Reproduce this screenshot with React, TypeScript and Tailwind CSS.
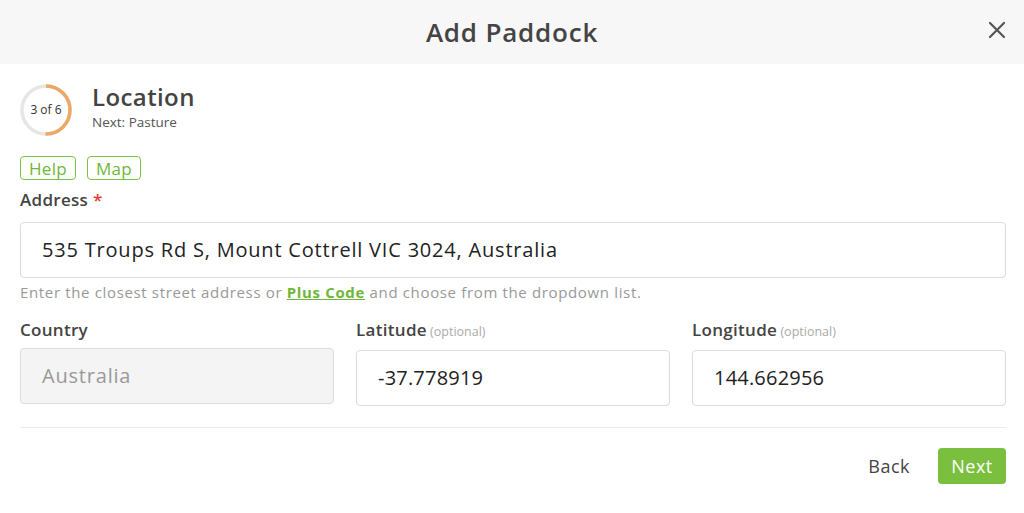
import React from "react";

export default function App() {
  const r = 24;
  const c = 2 * Math.PI * r;
  return (
    <div className="w-[1024px] h-[513px] bg-white overflow-hidden text-[#444]" style={{ fontFamily: '"Open Sans", "Noto Sans", sans-serif' }}>
      <div className="h-16 bg-[#f7f7f7] flex items-center justify-center relative">
        <h1 className="text-[26px] font-semibold text-[#444] tracking-[0.8px]">Add Paddock</h1>
        <button className="absolute right-[16px] top-[19px] text-[#555]">
          <svg width="22" height="22" viewBox="0 0 22 22" fill="none" stroke="currentColor" strokeWidth="2.2" strokeLinecap="round">
            <path d="M4 4L18 18M18 4L4 18" />
          </svg>
        </button>
      </div>
      <div className="pl-5 pr-[18px]">
        <div className="flex items-center gap-[20px] pt-[20px]">
          <div className="relative w-[52px] h-[52px] flex items-center justify-center">
            <svg width="52" height="52" viewBox="0 0 52 52" className="absolute inset-0">
              <circle cx="26" cy="26" r={r} fill="none" stroke="#e6e6e6" strokeWidth="3.5" />
              <circle cx="26" cy="26" r={r} fill="none" stroke="#eca866" strokeWidth="3.5" strokeDasharray={`${c * 0.5} ${c}`} transform="rotate(-90 26 26)" />
            </svg>
            <span className="relative text-[12px] text-[#333]">3 of 6</span>
          </div>
          <div className="flex flex-col -mt-[8px]">
            <span className="text-[24px] font-semibold leading-[33px] text-[#444] tracking-[0.4px]">Location</span>
            <span className="text-[13.5px] leading-[19px] text-[#555]">Next: Pasture</span>
          </div>
        </div>
        <div className="flex gap-[11px] mt-[20px]">
          <button className="h-[24px] px-[8px] border-[1.5px] border-[#7fc241] rounded-[4px] text-[#6fb738] text-[17px] leading-none tracking-[0.3px]">Help</button>
          <button className="h-[24px] px-[8px] border-[1.5px] border-[#7fc241] rounded-[4px] text-[#6fb738] text-[17px] leading-none tracking-[0.3px]">Map</button>
        </div>
        <div className="mt-[9px] text-[17px] font-semibold text-[#444] leading-[22px] tracking-[0.3px]">
          Address <span className="text-[#e53935]">*</span>
        </div>
        <div className="mt-[11px] h-[56px] border border-[#dcdcdc] rounded-[4px] flex items-center px-[21px] text-[20px] text-[#222] tracking-[0.8px]">
          535 Troups Rd S, Mount Cottrell VIC 3024, Australia
        </div>
        <div className="mt-[4px] text-[15px] text-[#999] leading-[20px] tracking-[0.65px]">
          Enter the closest street address or <a className="font-bold text-[#6fb738] underline">Plus Code</a> and choose from the dropdown list.
        </div>
        <div className="grid grid-cols-3 gap-[22px] mt-[17px]">
          {[
            { label: "Country", value: "Australia", disabled: true },
            { label: "Latitude", value: "-37.778919", optional: true },
            { label: "Longitude", value: "144.662956", optional: true },
          ].map((f) => (
            <div key={f.label} className="flex flex-col">
              <div className="text-[17px] font-semibold text-[#444] leading-[22px] tracking-[0.3px]">
                {f.label}
                {f.optional && <span className="text-[12.5px] font-normal text-[#aaa] tracking-normal"> (optional)</span>}
              </div>
              <div
                className={
                  f.disabled
                    ? "mt-[7px] h-[56px] border border-[#dcdcdc] rounded-[4px] bg-[#f4f4f4] flex items-center px-[21px] text-[20px] text-[#999] tracking-[0.8px]"
                    : "mt-[7px] h-[56px] border border-[#dcdcdc] rounded-[4px] bg-white flex items-center px-[21px] text-[20px] text-[#222] tracking-[0.2px]"
                }
              >
                {f.value}
              </div>
            </div>
          ))}
        </div>
        <div className="mt-[21px] h-px bg-[#ebebeb]" />
        <div className="flex justify-end items-center gap-[28px] mt-[20px]">
          <button className="text-[18px] text-[#444] tracking-[0.5px]">Back</button>
          <button className="h-[36px] w-[68px] rounded-[4px] bg-[#7bbf3e] text-white text-[18px] tracking-[0.5px]">Next</button>
        </div>
      </div>
    </div>
  );
}
